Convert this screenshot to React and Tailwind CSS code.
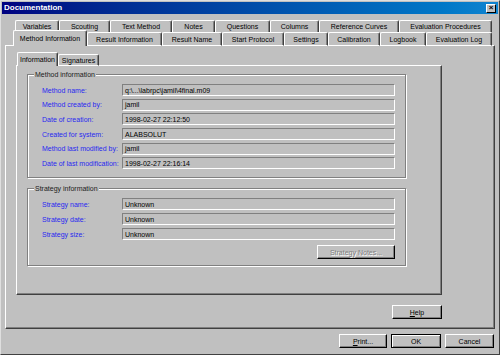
import React from "react";

const topTabs = [
  { label: "Variables", w: "w-[44px]" },
  { label: "Scouting", w: "w-[51px]" },
  { label: "Text Method", w: "w-[62px]" },
  { label: "Notes", w: "w-[43px]" },
  { label: "Questions", w: "w-[55px]" },
  { label: "Columns", w: "w-[49px]" },
  { label: "Reference Curves", w: "w-[80px]" },
  { label: "Evaluation Procedures", w: "w-[93px]" },
];

const frontTabs = [
  { label: "Result Information", w: "w-[75px]" },
  { label: "Result Name", w: "w-[60px]" },
  { label: "Start Protocol", w: "w-[62px]" },
  { label: "Settings", w: "w-[44px]" },
  { label: "Calibration", w: "w-[52px]" },
  { label: "Logbook", w: "w-[46px]" },
  { label: "Evaluation Log", w: "w-[66px]" },
];

const methodRows = [
  ["Method name:", "q:\\...\\labrpc\\jamil\\4final.m09"],
  ["Method created by:", "jamil"],
  ["Date of creation:", "1998-02-27 22:12:50"],
  ["Created for system:", "ALABSOLUT"],
  ["Method last modified by:", "jamil"],
  ["Date of last modification:", "1998-02-27 22:16:14"],
];

const strategyRows = [
  ["Strategy name:", "Unknown"],
  ["Strategy date:", "Unknown"],
  ["Strategy size:", "Unknown"],
];

const tabBase =
  "flex items-center justify-center border-t border-l border-r border-t-white border-l-white border-r-[#404040] rounded-t-[2px] shadow-[inset_-1px_0_0_#808080] bg-[#c0c0c0] text-[7px] leading-none text-black whitespace-nowrap";

function Field({ label, value }) {
  return (
    <div className="flex items-center h-[12px]">
      <span className="w-[80px] text-[7px] leading-none text-[#2828f0] whitespace-nowrap">{label}</span>
      <div className="w-[273px] h-[12px] flex items-center pl-[2px] border border-t-[#808080] border-l-[#808080] border-b-white border-r-white text-[7px] leading-none text-black">
        {value}
      </div>
    </div>
  );
}

function Button({ children, className = "", def = false, disabled = false }) {
  return (
    <div
      className={
        "h-[14px] flex items-center justify-center text-[7px] leading-none " +
        (disabled ? "text-[#808080] [text-shadow:1px_1px_0_#fff] " : "text-black ") +
        (def
          ? "border border-black shadow-[inset_1px_1px_0_#fff,inset_-1px_-1px_0_#808080] "
          : "border border-t-white border-l-white border-r-black border-b-black shadow-[inset_-1px_-1px_0_#808080] ") +
        className
      }
    >
      {children}
    </div>
  );
}

function GroupBox({ title, className, children }) {
  return (
    <div
      className={
        "relative ml-[10px] w-[379px] border border-[#808080] shadow-[inset_1px_1px_0_#fff,1px_1px_0_#fff] " +
        className
      }
    >
      <span className="absolute -top-[5px] left-[6px] px-[1px] bg-[#c0c0c0] text-[7px] leading-[9px] text-[#202020]">
        {title}
      </span>
      {children}
    </div>
  );
}

export default function App() {
  return (
    <div
      className="w-[500px] h-[355px] bg-[#c0c0c0] border border-t-[#dfdfdf] border-l-[#dfdfdf] border-r-[#404040] border-b-[#404040] p-[1px] overflow-hidden"
      style={{ fontFamily: '"Liberation Sans", Arial, sans-serif' }}
    >
      {/* Title bar */}
      <div className="h-[12px] flex items-center justify-between bg-linear-to-r from-[#000080] to-[#1084d0] pl-[2px] pr-[2px]">
        <span className="text-[8px] font-bold leading-none text-white">Documentation</span>
        <div className="w-[10px] h-[9px] flex items-center justify-center bg-[#c0c0c0] border border-t-white border-l-white border-r-black border-b-black text-[8px] leading-none font-bold text-black">
          ×
        </div>
      </div>

      {/* Back tab row */}
      <div className="flex pl-[13px] mt-[6px] h-[12px]">
        {topTabs.map((t) => (
          <div key={t.label} className={tabBase + " h-[12px] " + t.w}>
            {t.label}
          </div>
        ))}
      </div>

      {/* Front tab row */}
      <div className="relative z-10 flex items-end pl-[11px] h-[14px] -mb-px">
        <div className={tabBase + " h-[16px] w-[74px] pb-[1px]"}>Method Information</div>
        {frontTabs.map((t) => (
          <div key={t.label} className={tabBase + " h-[14px] border-b border-b-white " + t.w}>
            {t.label}
          </div>
        ))}
      </div>

      {/* Main panel */}
      <div className="ml-[3px] w-[490px] h-[284px] border border-t-white border-l-white border-r-[#404040] border-b-[#404040] shadow-[inset_-1px_-1px_0_#808080] pt-[6px] pl-[10px]">
        {/* Sub tabs */}
        <div className="relative z-10 flex items-end pl-[1px] h-[14px] -mb-px">
          <div className={tabBase + " h-[14px] w-[41px]"}>Information</div>
          <div className={tabBase + " h-[12px] w-[41px] border-b border-b-white"}>Signatures</div>
        </div>

        {/* Inner panel */}
        <div className="w-[426px] h-[230px] border border-t-white border-l-white border-r-[#404040] border-b-[#404040] shadow-[inset_-1px_-1px_0_#808080] flex flex-col">
          <GroupBox title="Method information" className="mt-[8px] h-[104px] pt-[9px] pl-[14px]">
            <div className="flex flex-col gap-[2.7px]">
              {methodRows.map(([l, v]) => (
                <Field key={l} label={l} value={v} />
              ))}
            </div>
          </GroupBox>

          <GroupBox title="Strategy information" className="mt-[10px] h-[78px] pt-[9px] pl-[14px] flex flex-col">
            <div className="flex flex-col gap-[3px]">
              {strategyRows.map(([l, v]) => (
                <Field key={l} label={l} value={v} />
              ))}
            </div>
            <Button disabled className="self-end mr-[10px] mt-[5px] w-[78px]">
              Strategy Notes...
            </Button>
          </GroupBox>
        </div>

        <div className="w-[426px] flex justify-end mt-[10px]">
          <Button className="w-[50px]">
            <span>
              <u>H</u>elp
            </span>
          </Button>
        </div>
      </div>

      {/* Dialog buttons */}
      <div className="flex justify-end gap-[4px] pr-[4px] mt-[5px]">
        <Button className="w-[48px]">
          <span>
            <u>P</u>rint...
          </span>
        </Button>
        <Button def className="w-[50px]">
          OK
        </Button>
        <Button className="w-[49px]">Cancel</Button>
      </div>
    </div>
  );
}
